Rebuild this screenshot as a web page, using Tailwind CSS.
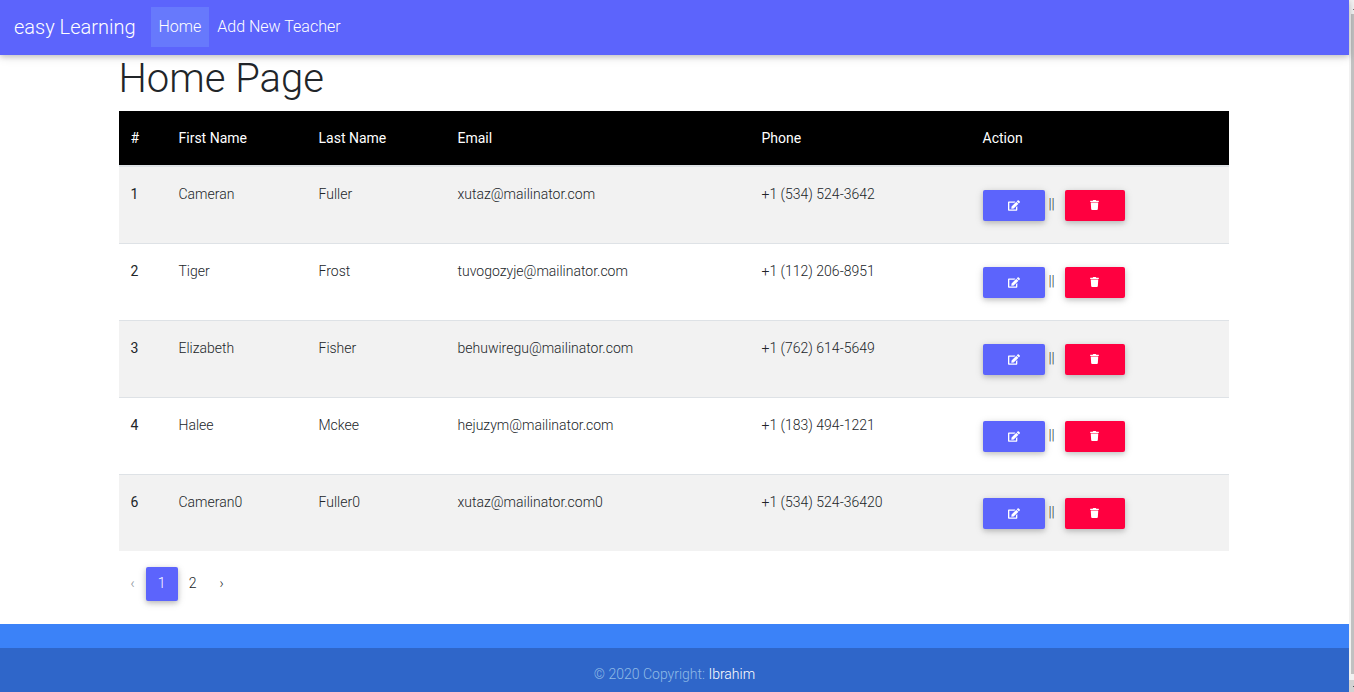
<!DOCTYPE html>
<html lang="en">
<head>
<meta charset="utf-8">
<meta name="viewport" content="width=device-width, initial-scale=1">
<title>easy Learning</title>
<script src="https://cdn.jsdelivr.net/npm/@tailwindcss/browser@4"></script>
</head>
<body class="flex h-screen overflow-hidden bg-white font-['Roboto','Liberation_Sans',sans-serif] text-base font-light text-[#212529]">
<svg class="hidden" aria-hidden="true">
  <symbol id="edit" viewBox="0 0 576 512"><path fill="currentColor" d="M402.600 83.200l90.200 90.200c3.800 3.800 3.800 10 0 13.800L274.400 405.600l-92.800 10.300c-12.400 1.400-22.900-9.100-21.500-21.500l10.300-92.800L388.800 83.200c3.800-3.800 10-3.800 13.800 0zm162-22.900l-48.800-48.800c-15.200-15.200-39.900-15.200-55.200 0l-35.400 35.400c-3.800 3.800-3.800 10 0 13.800l90.200 90.200c3.800 3.800 10 3.800 13.800 0l35.400-35.400c15.200-15.300 15.200-40 0-55.200zM384 346.200V448H64V128h229.800c3.200 0 6.200-1.300 8.500-3.500l40-40c7.600-7.600 2.200-20.500-8.500-20.500H48C21.500 64 0 85.500 0 112v352c0 26.500 21.500 48 48 48h352c26.500 0 48-21.500 48-48V306.200c0-10.700-12.900-16-20.500-8.500l-40 40c-2.200 2.300-3.500 5.300-3.500 8.500z"/></symbol>
  <symbol id="trash" viewBox="0 0 448 512"><path fill="currentColor" d="M432 32H312l-9.400-18.700A24 24 0 0 0 281.100 0H166.800a23.700 23.700 0 0 0-21.400 13.300L136 32H16A16 16 0 0 0 0 48v32a16 16 0 0 0 16 16h416a16 16 0 0 0 16-16V48a16 16 0 0 0-16-16zM53.200 467a48 48 0 0 0 47.900 45h245.800a48 48 0 0 0 47.900-45L416 128H32z"/></symbol>
</svg>
<div class="flex min-w-0 grow flex-col">
  <nav class="z-10 flex h-[55px] shrink-0 items-center bg-[#5c64fc] px-[14px] pb-[2px] text-white shadow-[0_2px_5px_0_rgba(0,0,0,0.16),0_2px_10px_0_rgba(0,0,0,0.12)]">
    <a href="#" class="mr-[15px] text-xl">easy Learning</a>
    <a href="#" aria-current="page" class="bg-[#6779fc] px-2 py-2 leading-6">Home</a>
    <a href="#" class="px-2 py-2 leading-6">Add New Teacher</a>
  </nav>
  <main class="mx-auto w-full max-w-[1140px] grow pr-[16px] pl-[14px]">
    <h1 class="mb-2 text-[40px] leading-[48px]">Home Page</h1>
    <table class="w-full table-fixed border-separate border-spacing-0 text-left text-[14px] leading-[22px]">
      <colgroup><col class="w-[48px]"><col class="w-[140px]"><col class="w-[139px]"><col class="w-[304px]"><col class="w-[221px]"><col></colgroup>
      <thead class="bg-black text-white">
        <tr class="*:border-b-2 *:border-[#dee2e6] *:bg-clip-padding *:px-3 *:py-4 *:font-normal">
          <th scope="col">#</th><th scope="col">First Name</th><th scope="col">Last Name</th><th scope="col">Email</th><th scope="col">Phone</th><th scope="col">Action</th>
        </tr>
      </thead>
      <tbody id="rows"></tbody>
    </table>
    <nav aria-label="Pages" class="mt-4 flex text-[14px] leading-[22px]">
      <span class="pt-[5px] pr-[11px] pb-[7px] pl-3 text-[#868e96]">‹</span>
      <a href="#" aria-current="page" class="w-8 rounded-[2px] bg-[#5c64fc] pt-[5px] pb-[7px] text-center text-white shadow-[0_2px_5px_0_rgba(0,0,0,0.2),0_2px_10px_0_rgba(0,0,0,0.12)]">1</a>
      <a href="#" class="px-[11px] pt-[5px] pb-[7px]">2</a>
      <a href="#" class="px-3 pt-[5px] pb-[7px]">›</a>
    </nav>
  </main>
  <footer class="shrink-0 bg-[#3b82f8] pt-6">
    <div class="bg-[#2f66c9] pt-[14px] pb-[6px] text-center text-[14px] leading-6 text-[#8fbbe6]">© 2020 Copyright: <a href="#" class="text-white">Ibrahim</a></div>
  </footer>
</div>
<div aria-hidden="true" class="flex w-[5px] shrink-0 flex-col bg-[#f1f1f1]">
  <div class="flex h-[14px] items-center justify-end pt-1"><i class="h-px w-px bg-[#777]"></i></div>
  <div class="ml-[2px] grow bg-[#c1c1c1]"></div>
  <div class="mt-[6px] flex h-3 items-center justify-end bg-[#d2d2d2]"><i class="h-px w-px bg-[#505050]"></i></div>
</div>
<script>
const teachers = [
  [1, 'Cameran', 'Fuller', 'xutaz@mailinator.com', '+1 (534) 524-3642'],
  [2, 'Tiger', 'Frost', 'tuvogozyje@mailinator.com', '+1 (112) 206-8951'],
  [3, 'Elizabeth', 'Fisher', 'behuwiregu@mailinator.com', '+1 (762) 614-5649'],
  [4, 'Halee', 'Mckee', 'hejuzym@mailinator.com', '+1 (183) 494-1221'],
  [6, 'Cameran0', 'Fuller0', 'xutaz@mailinator.com0', '+1 (534) 524-36420'],
];
document.getElementById('rows').innerHTML = teachers.map(([id, ...cells]) => `
  <tr class="align-top odd:bg-[#f2f2f2] *:border-[#dee2e6] *:px-3 *:pt-4 not-first:*:border-t">
    <th scope="row" class="font-normal">${id}</th>
    ${cells.map(c => `<td>${c}</td>`).join('')}
    <td class="pb-[22px]">
      <div class="mt-[7px] flex items-center">
        <button type="button" aria-label="Edit" class="flex h-[31px] w-[62px] items-center justify-center rounded-[2px] bg-[#5c64fc] pb-px text-white shadow-[0_2px_5px_0_rgba(0,0,0,0.16),0_2px_10px_0_rgba(0,0,0,0.12)]"><svg class="h-[11px] w-[12px]"><use href="#edit"/></svg></button>
        <span class="mx-1 mb-[3px] w-3">||</span>
        <button type="button" aria-label="Delete" class="flex h-[31px] w-[60px] items-center justify-center rounded-[2px] bg-[#ff0040] pb-px text-white shadow-[0_2px_5px_0_rgba(0,0,0,0.16),0_2px_10px_0_rgba(0,0,0,0.12)]"><svg class="h-[10px] w-[9px]"><use href="#trash"/></svg></button>
      </div>
    </td>
  </tr>`).join('');
</script>
</body>
</html>
